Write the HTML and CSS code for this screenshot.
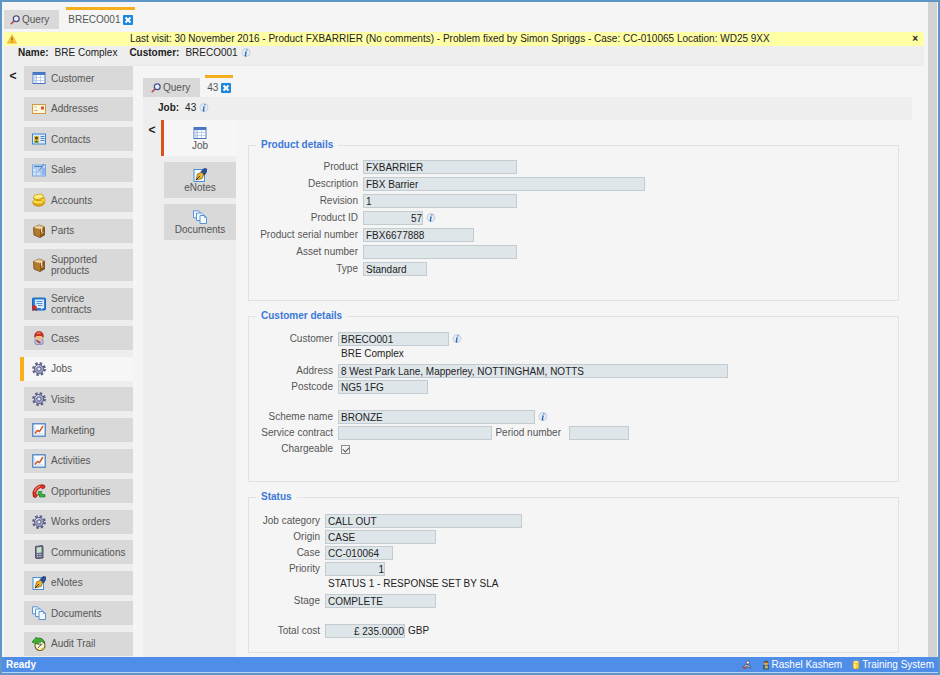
FILE: index.html
```html
<!DOCTYPE html>
<html lang="en">
<head>
  <meta charset="UTF-8">
  <meta name="viewport" content="width=device-width, initial-scale=1">
  <title>Job 43 - BRECO001</title>
  <link rel="stylesheet" href="styles.css">
</head>
<body>

<!-- Icon definitions -->
<svg class="sprite" aria-hidden="true">
  <symbol id="i-search" viewBox="0 0 12 12">
    <path d="M1 11 5 7" stroke="#c0504d" stroke-width="2"/>
    <circle cx="7.500" cy="4.500" r="3.500" fill="#e4ecfa" stroke="#4a4a86" stroke-width="1.500"/>
    <path d="M6 4q.5-1.500 2-1.500" fill="none" stroke="#fff"/>
  </symbol>
  <symbol id="i-close" viewBox="0 0 10 10">
    <rect width="10" height="10" rx="1" fill="#1a86dc"/>
    <path d="M2.500 2.500l5 5M7.500 2.500l-5 5" stroke="#fff" stroke-width="2"/>
  </symbol>
  <symbol id="i-warning" viewBox="0 0 12 12">
    <path d="M6 1 11.500 11H.5z" fill="#ffc62e" stroke="#e8a33a" stroke-width=".8"/>
    <path d="M6 4v3.500M6 8.500v1.300" stroke="#6b4a12" stroke-width="1.200"/>
  </symbol>
  <symbol id="i-info" viewBox="0 0 10 10">
    <circle cx="5" cy="4.500" r="4" fill="#e3edf8" stroke="#b9c9dc" stroke-width=".8"/>
    <path d="M6 1.300 5.700 2.500M5.300 3.500 4.300 7.500q-.2.900 1 .3M4.100 4h1.200" fill="none" stroke="#2e62a8" stroke-width="1.200"/>
  </symbol>
  <symbol id="i-table" viewBox="0 0 14 14">
    <rect x="1" y="1.500" width="12" height="11" fill="#fff" stroke="#4a74c0"/>
    <path d="M1 2h12v2H1z" fill="#4a78c8"/>
    <path d="M1.500 4H4.500v8h-3z" fill="#d4e2f8"/>
    <path d="M4.500 4v8M8.500 4v8M1.500 6.500h11M1.500 9.500h11" stroke="#a9c0e6" stroke-width=".7"/>
  </symbol>
  <symbol id="i-address" viewBox="0 0 14 14">
    <rect x=".5" y="2.500" width="13" height="9" fill="#fff6dc" stroke="#d09a45"/>
    <rect x="9" y="4.500" width="3" height="3" fill="#d9512c"/>
    <path d="M2.500 8.500h3" stroke="#b8a888"/>
    <path d="M2 5h3" stroke="#e0c890"/>
  </symbol>
  <symbol id="i-contact" viewBox="0 0 14 14">
    <rect x=".5" y="2" width="13" height="10" fill="#dcebfb" stroke="#3e86cc"/>
    <rect x="2" y="4" width="5" height="6.500" fill="#e8c63c"/>
    <circle cx="4.500" cy="6" r="1.500" fill="#5b3a12"/>
    <path d="M2.200 10.500q2.300-4 4.600 0z" fill="#3c6d2e"/>
    <path d="M8.500 4.500h4M8.500 6.500h4M8.500 8.500h4" stroke="#4a86c8"/>
  </symbol>
  <symbol id="i-sales" viewBox="0 0 14 14">
    <rect x=".5" y="2" width="13" height="11" fill="#cfe2f8" stroke="#79a7de"/>
    <path d="M.5 5h13M.5 9h13M4.500 2v11M9 2v11" stroke="#94b8e6" stroke-width=".8"/>
    <path d="M2 3.500h8M6 8l3-2.500 3-4.500" fill="none" stroke="#4d7fc6"/>
    <path d="M10 5h3v7h-3z" fill="#8fb6ea"/>
  </symbol>
  <symbol id="i-coins" viewBox="0 0 14 14">
    <path d="M1 8.500v2q1 2.800 5.500 2.800t6-2.800v-2" fill="#e3a912" stroke="#b98409" stroke-width=".7"/>
    <ellipse cx="6.700" cy="8.500" rx="5.700" ry="2.600" fill="#ffe24a" stroke="#c4930c" stroke-width=".7"/>
    <path d="M1.500 4v1.500q1 2 4.500 2.300t6-1.800v-1.500" fill="#e6b017" stroke="#b98409" stroke-width=".7"/>
    <ellipse cx="6.500" cy="3.800" rx="5" ry="2.500" fill="#fff07a" stroke="#c4930c" stroke-width=".7" transform="rotate(-8 6 4)"/>
    <ellipse cx="11" cy="7" rx="2.500" ry="1.500" fill="#ffd93a" stroke="#c4930c" stroke-width=".6"/>
  </symbol>
  <symbol id="i-box" viewBox="0 0 14 14">
    <path d="M1.500 3.500 7 1l5.500 2V11L8 13.500 2 11z" fill="#b57a2c" stroke="#6b451a" stroke-width=".8"/>
    <path d="M1.500 3.500 7 1l5.500 2L8 5.200z" fill="#e8c184"/>
    <path d="M8 5.200 12.500 3V11L8 13.500z" fill="#8a571d"/>
    <path d="M4 2.500 10.300 4v3.500l-1.300.7V4.700L2.700 3z" fill="#f4e3bf"/>
    <path d="M9 9.500l2.500-1.200" stroke="#e8c184"/>
  </symbol>
  <symbol id="i-contract" viewBox="0 0 14 14">
    <rect x=".5" y="1" width="13" height="12" rx="1" fill="#2b82dc" stroke="#1d66b8"/>
    <rect x="3" y="2.500" width="9" height="8.500" fill="#d8ebff"/>
    <path d="M4.500 4.500h6M4.500 6.500h6M6 8.500h4.500" stroke="#5798dc"/>
    <circle cx="2.500" cy="10.500" r="2.300" fill="#d6281f"/>
    <path d="M1.500 12l-.8 2M3.500 12l.8 2" stroke="#a31a14"/>
    <path d="M9 12l3-2" stroke="#fff"/>
  </symbol>
  <symbol id="i-case" viewBox="0 0 14 14">
    <path d="M3 8.500q4-2 8 0v4.500q-4 1.500-8 0z" fill="#b8c6ec" stroke="#6d7cb0" stroke-width=".7"/>
    <circle cx="7" cy="6.500" r="3" fill="#f0bd8a"/>
    <path d="M2.800 6.500Q2 .8 7 .5 12 .8 11.200 6.500L9.500 4.500h-5z" fill="#d42b1b" stroke="#8d160c" stroke-width=".6"/>
    <path d="M5 2.500q2-1.300 3.500 0" fill="none" stroke="#ffb08a"/>
    <path d="M4.500 9.500 8.500 12" stroke="#c43a26" stroke-width="2"/>
  </symbol>
  <symbol id="i-gear" viewBox="0 0 14 14">
    <circle cx="7" cy="7" r="5.600" fill="none" stroke="#5d6088" stroke-width="2.600" stroke-dasharray="2.400 1.998"/>
    <circle cx="7" cy="7" r="4.500" fill="#a5a9cc" stroke="#5d6088" stroke-width="1"/>
    <circle cx="7" cy="7" r="2.100" fill="#e6e6ea" stroke="#5d6088" stroke-width="1"/>
    <path d="M3.700 5.500Q5 3.500 7 3.500" fill="none" stroke="#e9ebf8"/>
  </symbol>
  <symbol id="i-chart" viewBox="0 0 14 14">
    <rect x=".8" y=".8" width="12.400" height="12.400" fill="#fff" stroke="#4a80c4" stroke-width="1.300"/>
    <path d="M3 3v8h8" fill="none" stroke="#c3d3ea"/>
    <path d="M3 10.500 5.500 7.500 7.500 8.500 11 3" fill="none" stroke="#d0592c" stroke-width="1.500"/>
  </symbol>
  <symbol id="i-phone" viewBox="0 0 14 14">
    <path d="M1.500 13Q-.5 8 3 4T11 .8Q13.500 1 13 3.500L10.500 5 9 3.500Q6.500 4 5 6.500T4 9.500L5.500 11 4 13.500z" fill="#d93222" stroke="#96150b" stroke-width=".7"/>
    <path d="M2.500 8Q3 4 8 2" fill="none" stroke="#ff9a86"/>
    <path d="M13 13H7.500V10.500L6.300 11.500V7.500H10L9 8.800l2 1.700H13z" fill="#39b23c" stroke="#16701c" stroke-width=".6"/>
  </symbol>
  <symbol id="i-mobile" viewBox="0 0 14 14">
    <path d="M3.500 1.500 10 .5l1 .7V13l-6.500.7-1-.8z" fill="#6e6e90" stroke="#3e3e5c" stroke-width=".8"/>
    <path d="M4.700 2.500 9.500 2v5.500l-4.800.5z" fill="#c2e6c0"/>
    <path d="M5 9.500h4.500M5 11.500h4.500" stroke="#c2c2d8" stroke-dasharray="1 .7"/>
  </symbol>
  <symbol id="i-note" viewBox="0 0 14 14">
    <rect x="1" y="1.500" width="10.500" height="12" fill="#f4f9ff" stroke="#4a90d0"/>
    <path d="M3 12l1.500-6L9 4l2 2-2 4.500z" fill="#e9b52c" stroke="#7a5510" stroke-width=".7"/>
    <path d="M3 12 7 8" stroke="#4a3208"/>
    <path d="M8 3.500 11 .5l3 .5-.5 3L11.500 7z" fill="#2c4f9a" stroke="#16305f" stroke-width=".6"/>
  </symbol>
  <symbol id="i-docs" viewBox="0 0 14 14">
    <g fill="#f4f9ff" stroke="#4a8ad2" stroke-width=".9">
      <path d="M.5.8h5l1.500 1.500v5.500H.5z"/>
      <path d="M3.500 3h5L10 4.500v6H3.500z"/>
      <path d="M7 5.500h4.500l2 2v6H7z"/>
    </g>
    <path d="M11.500 5.500v2h2" fill="none" stroke="#4a8ad2" stroke-width=".7"/>
  </symbol>
  <symbol id="i-audit" viewBox="0 0 14 14">
    <circle cx="8" cy="8.500" r="5" fill="#fff8d6" stroke="#6f6a28" stroke-width="1.200"/>
    <path d="M8 5v3.500l2.500-1.500M8 8.500 6 11" fill="none" stroke="#444" stroke-width=".9"/>
    <path d="M13 6Q10.500-.5 5 1.500L4.500 0 0 5l6.500 2.500-.5-2.500q3.500-1.500 7 1z" fill="#3fae32" stroke="#1c6d16" stroke-width=".7"/>
    <path d="M9 12.500 12 11" stroke="#e0b030" stroke-width="1.500"/>
  </symbol>
  <symbol id="i-link" viewBox="0 0 12 12">
    <circle cx="7" cy="3" r="2" fill="#e6eaf2" stroke="#3b3b4e" stroke-width=".8"/>
    <path d="M1 9 4 5.500 9.500 6.500 10.500 9.500 6 8z" fill="#c9cfdd" stroke="#3b3b4e" stroke-width=".8"/>
    <path d="M2 11l3-3M2.500 8l2.500 3" stroke="#d23a3a" stroke-width="1.200"/>
  </symbol>
  <symbol id="i-user" viewBox="0 0 10 12">
    <path d="M2 6h6v5H2z" fill="#4a6f9a" stroke="#2c3d56" stroke-width=".6"/>
    <circle cx="5" cy="4" r="2.500" fill="#d9a860"/>
    <path d="M2.300 4Q2 1 5 1t2.700 3L5 2.700z" fill="#5b4520"/>
    <path d="M4 7h3v3H4z" fill="#e2c23a"/>
  </symbol>
  <symbol id="i-database" viewBox="0 0 10 12">
    <path d="M1.500 2.500v7q3.500 2.800 7 0v-7z" fill="#ffcf28" stroke="#c8900c" stroke-width=".6"/>
    <path d="M2.500 3.500v6.500q1 .5 2 .5V4z" fill="#fff3a8"/>
    <ellipse cx="5" cy="2.500" rx="3.500" ry="1.500" fill="#fff6ba" stroke="#c8900c" stroke-width=".6"/>
  </symbol>
</svg>

<div class="app">
  <div class="workspace">

    <!-- Top level tabs -->
    <div class="tabs">
      <button class="tab" type="button"><svg class="icon-sm"><use href="#i-search"/></svg>Query</button>
      <button class="tab active" type="button">BRECO001 <svg class="icon-sm"><use href="#i-close"/></svg></button>
    </div>

    <div class="notice">
      <svg class="icon-sm"><use href="#i-warning"/></svg>
      <p>Last visit: 30 November 2016 - Product FXBARRIER (No comments) - Problem fixed by Simon Spriggs - Case: CC-010065 Location: WD25 9XX</p>
      <button class="plain" type="button" aria-label="Dismiss">×</button>
    </div>

    <div class="summary">
      <b>Name:</b><span>BRE Complex</span>
      <b>Customer:</b><span>BRECO001</span><svg class="info"><use href="#i-info"/></svg>
    </div>

    <div class="columns">
      <button class="plain collapse" type="button" aria-label="Collapse menu">&lt;</button>

      <nav class="menu">
        <a href="#customer"><svg class="icon"><use href="#i-table"/></svg>Customer</a>
        <a href="#addresses"><svg class="icon"><use href="#i-address"/></svg>Addresses</a>
        <a href="#contacts"><svg class="icon"><use href="#i-contact"/></svg>Contacts</a>
        <a href="#sales"><svg class="icon"><use href="#i-sales"/></svg>Sales</a>
        <a href="#accounts"><svg class="icon"><use href="#i-coins"/></svg>Accounts</a>
        <a href="#parts"><svg class="icon"><use href="#i-box"/></svg>Parts</a>
        <a href="#products" class="tall"><svg class="icon"><use href="#i-box"/></svg>Supported<br>products</a>
        <a href="#contracts" class="tall"><svg class="icon"><use href="#i-contract"/></svg>Service<br>contracts</a>
        <a href="#cases"><svg class="icon"><use href="#i-case"/></svg>Cases</a>
        <a href="#jobs" class="active"><svg class="icon"><use href="#i-gear"/></svg>Jobs</a>
        <a href="#visits"><svg class="icon"><use href="#i-gear"/></svg>Visits</a>
        <a href="#marketing"><svg class="icon"><use href="#i-chart"/></svg>Marketing</a>
        <a href="#activities"><svg class="icon"><use href="#i-chart"/></svg>Activities</a>
        <a href="#opportunities"><svg class="icon"><use href="#i-phone"/></svg>Opportunities</a>
        <a href="#orders"><svg class="icon"><use href="#i-gear"/></svg>Works orders</a>
        <a href="#communications"><svg class="icon"><use href="#i-mobile"/></svg>Communications</a>
        <a href="#enotes"><svg class="icon"><use href="#i-note"/></svg>eNotes</a>
        <a href="#documents"><svg class="icon"><use href="#i-docs"/></svg>Documents</a>
        <a href="#audit"><svg class="icon"><use href="#i-audit"/></svg>Audit Trail</a>
      </nav>

      <div class="panel">
        <div class="tabs">
          <button class="tab" type="button"><svg class="icon-sm"><use href="#i-search"/></svg>Query</button>
          <button class="tab active" type="button">43 <svg class="icon-sm"><use href="#i-close"/></svg></button>
        </div>
        <div class="summary">
          <b>Job:</b><span>43</span><svg class="info"><use href="#i-info"/></svg>
        </div>

        <div class="job">
          <button class="plain collapse" type="button" aria-label="Collapse job menu">&lt;</button>
          <nav class="job-menu">
            <a href="#job" class="active"><svg class="icon"><use href="#i-table"/></svg>Job</a>
            <a href="#job-enotes"><svg class="icon"><use href="#i-note"/></svg>eNotes</a>
            <a href="#job-documents"><svg class="icon"><use href="#i-docs"/></svg>Documents</a>
          </nav>

          <form class="details">
            <fieldset class="product">
              <legend>Product details</legend>
              <div class="row"><label for="product">Product</label><input id="product" class="w-m" value="FXBARRIER" readonly></div>
              <div class="row"><label for="description">Description</label><input id="description" class="w-xl" value="FBX Barrier" readonly></div>
              <div class="row"><label for="revision">Revision</label><input id="revision" class="w-m" value="1" readonly></div>
              <div class="row"><label for="product-id">Product ID</label><input id="product-id" class="w-xs num" value="57" readonly><svg class="info"><use href="#i-info"/></svg></div>
              <div class="row"><label for="serial">Product serial number</label><input id="serial" class="w-s" value="FBX6677888" readonly></div>
              <div class="row"><label for="asset">Asset number</label><input id="asset" class="w-m" readonly></div>
              <div class="row"><label for="type">Type</label><input id="type" class="w-64" value="Standard" readonly></div>
            </fieldset>

            <fieldset class="customer">
              <legend>Customer details</legend>
              <div class="row"><label for="customer-code">Customer</label><input id="customer-code" class="w-s" value="BRECO001" readonly><svg class="info"><use href="#i-info"/></svg></div>
              <p>BRE Complex</p>
              <div class="row"><label for="address">Address</label><input id="address" class="w-xxl" value="8 West Park Lane, Mapperley, NOTTINGHAM, NOTTS" readonly></div>
              <div class="row"><label for="postcode">Postcode</label><input id="postcode" class="w-90" value="NG5 1FG" readonly></div>
              <div class="row spaced"><label for="scheme">Scheme name</label><input id="scheme" class="w-l" value="BRONZE" readonly><svg class="info"><use href="#i-info"/></svg></div>
              <div class="row"><label for="contract">Service contract</label><input id="contract" class="w-m" readonly><label class="inline" for="period">Period number</label><input id="period" class="w-xs" readonly></div>
              <div class="row"><label for="chargeable">Chargeable</label><input id="chargeable" type="checkbox" checked></div>
            </fieldset>

            <fieldset class="status">
              <legend>Status</legend>
              <div class="row"><label for="category">Job category</label><input id="category" class="w-l" value="CALL OUT" readonly></div>
              <div class="row"><label for="origin">Origin</label><input id="origin" class="w-s" value="CASE" readonly></div>
              <div class="row"><label for="case">Case</label><input id="case" class="w-68" value="CC-010064" readonly></div>
              <div class="row"><label for="priority">Priority</label><input id="priority" class="w-xs num" value="1" readonly></div>
              <p>STATUS 1 - RESPONSE SET BY SLA</p>
              <div class="row"><label for="stage">Stage</label><input id="stage" class="w-s" value="COMPLETE" readonly></div>
              <div class="row spaced"><label for="cost">Total cost</label><input id="cost" class="w-80 num" value="£ 235.0000" readonly><span class="unit">GBP</span></div>
            </fieldset>
          </form>
        </div>
      </div>
    </div>
  </div>

  <footer class="statusbar">
    <b>Ready</b>
    <svg class="icon-sm"><use href="#i-link"/></svg>
    <span><svg class="icon-sm"><use href="#i-user"/></svg>Rashel Kashem</span>
    <span><svg class="icon-sm"><use href="#i-database"/></svg>Training System</span>
  </footer>
</div>

</body>
</html>
```

FILE: styles.css
```css
* {
  box-sizing: border-box;
}
body {
  margin: 0;
  font-family: "Liberation Sans", Arial, sans-serif;
  font-size: 10px;
  line-height: 12px;
  color: #555;
}
p {
  margin: 0;
}
button, input {
  font: inherit;
  color: inherit;
}
a {
  color: inherit;
  text-decoration: none;
}
.sprite {
  position: absolute;
  width: 0;
  height: 0;
}
.icon {
  flex: none;
  width: 14px;
  height: 14px;
}
.icon-sm, .info {
  flex: none;
  width: 10px;
  height: 10px;
}
.plain {
  border: none;
  background: none;
  padding: 0;
  color: #222;
  font-weight: bold;
  cursor: pointer;
}

/* Window frame */
.app {
  display: flex;
  flex-direction: column;
  min-height: 100vh;
  border: 2px solid #5f96c6;
  background: #f5f5f5;
}
.workspace {
  flex: 1;
  display: flex;
  flex-direction: column;
  margin-right: 1px;
  padding: 0 4px 0 2px;
  border-right: 9px solid #d3d3d3;
}

/* Tabs */
.tabs {
  display: flex;
  align-items: flex-end;
  gap: 7px;
  height: 27px;
}
.tab {
  display: flex;
  align-items: center;
  gap: 2px;
  height: 19px;
  padding: 0 10px 0 6px;
  border: none;
  background: #d9d9d9;
  cursor: pointer;
}
.tab.active {
  height: 22px;
  padding: 0 2px;
  gap: 3px;
  background: #f5f5f5;
  border-top: 3px solid #f5ae1c;
}

.notice {
  display: flex;
  align-items: center;
  height: 14px;
  margin-top: 3px;
  padding: 0 6px 0 3px;
  background: #ffffa5;
  color: #222;
}
.notice p {
  flex: 1;
  padding-left: 113px;
}

.summary {
  display: flex;
  align-items: center;
  gap: 6px;
  height: 19px;
  padding: 0 14px 5px;
  background: #eee;
  color: #222;
}
.summary span + b {
  margin-left: 6px;
}
.summary .info {
  margin-left: -3px;
}

/* Main navigation */
.columns {
  flex: 1;
  display: flex;
  background: #eee;
}
.collapse {
  align-self: flex-start;
  width: 18px;
  margin-top: 5px;
  font-size: 12px;
}
.menu {
  display: flex;
  flex-direction: column;
  justify-content: space-between;
  width: 111px;
  padding: 1px 0;
}
.menu a {
  display: flex;
  align-items: center;
  gap: 5px;
  height: 24px;
  margin-left: 2px;
  padding-left: 8px;
  background: #d9d9d9;
  line-height: 11px;
}
.menu a.tall {
  height: 32px;
}
.menu a.active {
  margin-left: -2px;
  border-left: 4px solid #fbb016;
  background: #f7f7f7;
}

.panel {
  flex: 1;
  display: flex;
  flex-direction: column;
  padding: 4px 12px 0 10px;
  background: #f5f5f5;
  border-top: 1px solid #e9e9e9;
}
.panel .tabs {
  gap: 5px;
}
.panel .tab:first-child {
  padding-left: 8px;
}
.panel .summary {
  height: 23px;
  padding: 0 15px 2px;
}

/* Job navigation */
.job {
  flex: 1;
  display: flex;
}
.job > .collapse {
  align-self: stretch;
  display: flex;
  justify-content: center;
  margin: 0;
  padding-top: 4px;
}
.job > .collapse, .job-menu {
  background: #eee;
}
.job-menu {
  display: flex;
  flex-direction: column;
  gap: 6px;
  width: 75px;
}
.job-menu a {
  display: flex;
  flex-direction: column;
  align-items: center;
  justify-content: center;
  height: 36px;
  margin-left: 3px;
  padding-top: 1px;
  background: #d9d9d9;
}
.job-menu a.active {
  margin-left: 0;
  border-left: 3px solid #d9531e;
  background: #f7f7f7;
}

/* Job form */
.details {
  flex: 1;
  display: flex;
  flex-direction: column;
  gap: 9px;
  padding: 19px 13px 4px 12px;
  min-width: 0;
}
fieldset {
  display: flex;
  flex-direction: column;
  gap: 2px;
  min-width: 0;
  margin: 0;
  padding: 10px 10px 25px 15px;
  border: 1px solid #e2e2e2;
}
fieldset.product {
  gap: 3px;
  padding: 9px 10px 24px 15px;
}
fieldset.status {
  padding: 11px 10px 14px 15px;
}
legend {
  margin-left: -8px;
  padding: 0 5px;
  color: #3c78d8;
  font-weight: bold;
}
.row {
  display: flex;
  align-items: center;
  gap: 5px;
  height: 14px;
}
.row .info {
  margin-left: -2px;
}
.row label {
  display: flex;
  justify-content: flex-end;
  flex: none;
  white-space: nowrap;
}
.product label {
  width: 94px;
}
.customer label {
  width: 69px;
}
.status label {
  width: 56px;
}
.row label.inline {
  width: 64px;
  margin-right: 3px;
}
.row input {
  min-width: 0;
  height: 14px;
  margin: 0;
  padding: 0 2px;
  border: 1px solid #c3ccd1;
  background: #dfe6ea;
  color: #222;
}
.row input.num {
  padding: 0;
  text-align: right;
}
.row input[type="checkbox"] {
  appearance: none;
  width: 9px;
  height: 9px;
  margin-left: 3px;
  padding: 0;
  border-color: #8a8a8a;
  background: #f5f5f5;
}
.row input[type="checkbox"]:checked::before {
  content: "";
  display: block;
  width: 5px;
  height: 3px;
  margin: 1px;
  border: solid #555;
  border-width: 0 0 1px 1px;
  transform: rotate(-45deg);
}
.row.spaced {
  margin-top: 14px;
}
fieldset p {
  height: 12px;
  margin-bottom: 2px;
  color: #222;
}
.customer p {
  padding-left: 77px;
}
.status p {
  padding-left: 64px;
}
.unit {
  margin-left: -2px;
  color: #222;
}
.w-xs { width: 60px; }
.w-64 { width: 64px; }
.w-68 { width: 68px; }
.w-80 { width: 80px; }
.w-90 { width: 90px; }
.w-s { width: 111px; }
.w-m { width: 154px; }
.w-l { width: 197px; }
.w-xl { width: 282px; }
.w-xxl { width: 390px; }

.statusbar {
  display: flex;
  align-items: center;
  gap: 9px;
  height: 16px;
  padding: 0 4px;
  background: #4f8ee8;
  border-bottom: 1px solid #b5d1f5;
  color: #fff;
}
.statusbar b {
  flex: 1;
}
.statusbar span {
  display: flex;
  align-items: center;
  gap: 1px;
}
```
